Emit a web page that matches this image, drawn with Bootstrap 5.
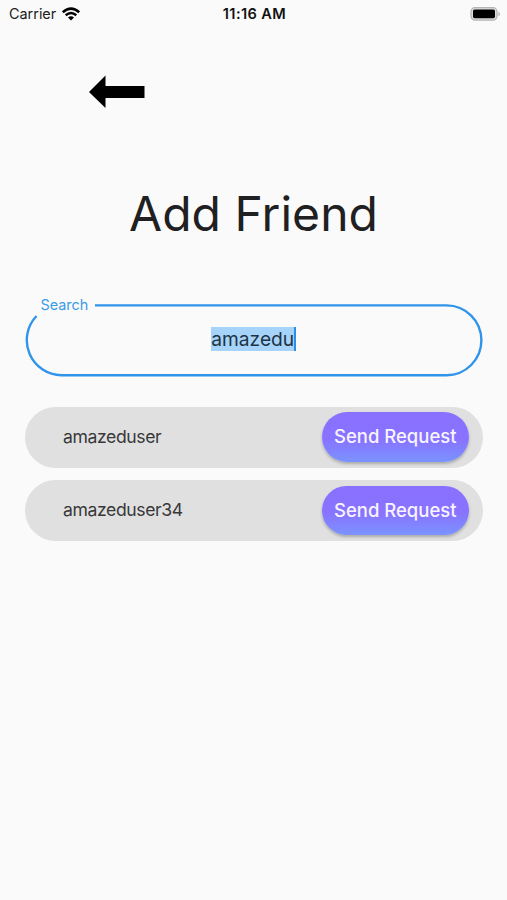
<!DOCTYPE html>
<html lang="en">
<head>
<meta charset="utf-8">
<meta name="viewport" content="width=device-width, initial-scale=1">
<title>Add Friend</title>
<link href="https://cdn.jsdelivr.net/npm/bootstrap@5.3.0/dist/css/bootstrap.min.css" rel="stylesheet">
<style>
body{background:#fafafa;color:#202022;font-family:Inter,"Liberation Sans",sans-serif;min-height:900px;overflow:hidden}
.status{height:28px;padding:0 7px 0 9px;font-size:14.4px;line-height:28px}
.status .side{flex:1 1 0}
.wifi{margin-left:5px}
.clock{font-weight:600;color:#111;font-size:14.6px;letter-spacing:.4px}
.back{margin:47px 0 0 89px;line-height:0;width:56px}
.title{font-size:48px;line-height:60px;font-weight:400;margin:75px 0 0;letter-spacing:.05px}
.page{padding:0 24.5px 0 25px}
.field{height:73px;margin-top:59.5px;padding-bottom:3px}
.outline{left:0;top:0}
.field-label{left:15.5px;top:-7.5px;font-size:14.4px;line-height:18px;color:#3c9be8}
.query{font-size:19.2px;line-height:24px;background:#a6d3f9;color:#1d3345;border-right:2px solid #2b8fe6}
.friends{margin-top:30px;gap:12.5px}
.friend{height:61px;border-radius:31px;background:#e0e0e0;padding:0 13.5px 0 38px}
.friend-name{font-size:17.6px;letter-spacing:-.4px;color:#38383a}
.btn-send{width:147.5px;height:49.5px;border-radius:25px;border:0;padding:0;font-size:18.5px;font-weight:550;color:#f7f4ff;background:linear-gradient(#8a70ff 0%,#8873ff 55%,#7b93ff 100%);box-shadow:0 2px 3px rgba(0,0,0,.24)}
.btn-send:hover{color:#fff}
</style>
</head>
<body>
<header class="status d-flex align-items-center">
  <div class="side d-flex align-items-center"><span>Carrier</span>
    <svg class="wifi" width="20" height="15" viewBox="0 0 20 15" fill="none" stroke="#000"><path d="M1.8 5.2Q10-2 18.2 5.2" stroke-width="2.5"/><path d="M4.7 8.2Q10 3.8 15.3 8.2" stroke-width="2.5"/><path d="M7 10.5Q10 8.1 13 10.5L10 13.6Z" fill="#000" stroke="none"/></svg>
  </div>
  <span class="clock">11:16 AM</span>
  <div class="side d-flex justify-content-end align-items-center">
    <svg width="30" height="15" viewBox="0 0 30 15"><rect x="1" y=".7" width="26" height="12.4" rx="4" fill="#ddd" stroke="#b4b4b4" stroke-width="1.3"/><rect x="3" y="2.6" width="22" height="8.6" rx="1.6" fill="#000"/><path d="M28.4 4.7Q30 5.5 30 7T28.4 9.3Z" fill="#b4b4b4"/></svg>
  </div>
</header>
<div class="back"><svg width="56" height="34" viewBox="0 0 56 34"><path d="M0 17 16.5 .5V11H55.5V23H16.5V33Z" fill="#000"/></svg></div>
<h1 class="title text-center">Add Friend</h1>
<main class="page">
  <div class="field position-relative d-flex align-items-center justify-content-center">
    <svg class="outline position-absolute" width="458" height="73" viewBox="0 0 458 73" fill="none" stroke="#2f94ea" stroke-width="2.4"><path d="M70 1.4H421.5A34.8 34.8 0 0 1 421.5 71.2H36.5A35 35 0 0 1 11.5 12"/></svg>
    <label class="field-label position-absolute">Search</label>
    <span class="query">amazedu</span>
  </div>
  <div class="friends d-flex flex-column">
    <div class="friend d-flex align-items-center justify-content-between"><span class="friend-name">amazeduser</span><button class="btn btn-send" type="button">Send Request</button></div>
    <div class="friend d-flex align-items-center justify-content-between"><span class="friend-name">amazeduser34</span><button class="btn btn-send" type="button">Send Request</button></div>
  </div>
</main>
<script src="https://cdn.jsdelivr.net/npm/bootstrap@5.3.0/dist/js/bootstrap.bundle.min.js"></script>
</body>
</html>
